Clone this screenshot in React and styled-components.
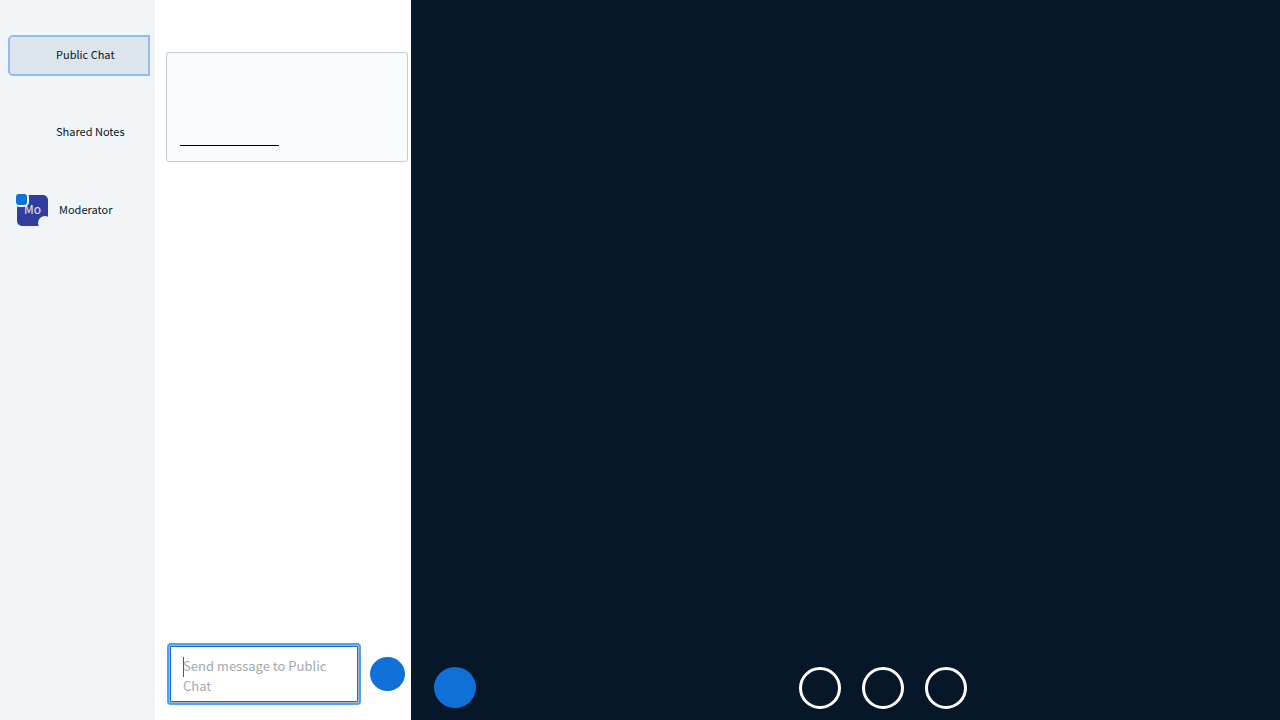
import React from "react";
import styled, { createGlobalStyle } from "styled-components";

const GlobalStyle = createGlobalStyle`
  *, *::before, *::after { box-sizing: border-box; }
  body {
    margin: 0;
    font-family: "Noto Sans CJK SC", "Noto Sans", sans-serif;
    color: #06172a;
  }
  button, textarea { font: inherit; color: inherit; margin: 0; }
`;

const Layout = styled.div`
  display: flex;
  min-height: 100vh;
`;

const Sidebar = styled.nav`
  flex: 0 0 155px;
  display: flex;
  flex-direction: column;
  gap: 36px;
  padding: 35px 5px 0 8px;
  background: #f1f5f8;
`;

const NavItem = styled.button`
  height: 41px;
  padding: 0 0 4px 46px;
  border: 2px solid ${(p) => (p.$active ? "#92bceb" : "transparent")};
  border-radius: 5px 0 0 5px;
  background: ${(p) => (p.$active ? "#dce4ed" : "transparent")};
  font-size: 11px;
  line-height: 16px;
  text-align: left;
  white-space: nowrap;
  cursor: pointer;
`;

const UserItem = styled.button`
  display: flex;
  align-items: center;
  gap: 11px;
  height: 43px;
  padding: 0 0 0 9px;
  border: 0;
  background: transparent;
  font-size: 11px;
  line-height: 16px;
  cursor: pointer;
`;

const UserName = styled.span`
  padding-bottom: 4px;
`;

const Avatar = styled.span`
  position: relative;
  display: flex;
  align-items: center;
  justify-content: center;
  width: 31px;
  height: 31px;
  padding-bottom: 4px;
  border-radius: 5px;
  background: #303f9f;
  color: #e6e9f5;
  font-size: 12px;
`;

const PresenterBadge = styled.span`
  position: absolute;
  top: -3px;
  left: -3px;
  width: 15px;
  height: 15px;
  border: 2px solid #f1f5f8;
  border-radius: 5px;
  background: #0f70d7;
`;

const VoiceBadge = styled.span`
  position: absolute;
  right: -4px;
  bottom: -4px;
  width: 14px;
  height: 14px;
  border-radius: 50%;
  background: #f1f5f8;
`;

const Chat = styled.section`
  flex: 0 0 256px;
  display: flex;
  flex-direction: column;
  justify-content: space-between;
  padding: 52px 3px 17px 11px;
  background: #fff;
`;

const Welcome = styled.div`
  display: flex;
  align-items: flex-end;
  height: 110px;
  padding: 0 13px 15px;
  border: 1px solid #c3cbd3;
  border-radius: 3px;
  background: #fafbfd;
`;

const LinkLine = styled.span`
  width: 99px;
  height: 1px;
  background: #000;
`;

const Composer = styled.form`
  display: flex;
  align-items: center;
  gap: 11px;
  padding: 0 3px;
`;

const Field = styled.div`
  position: relative;
  flex: 1;
  display: flex;
`;

const MessageInput = styled.textarea`
  flex: 1;
  min-width: 0;
  height: 58px;
  padding: 10px 13px;
  border: 1px solid #a7b3bd;
  border-radius: 2px;
  outline: 0;
  box-shadow: 0 0 0 2px #559ff0, inset 0 0 0 1px #0f70d7;
  background: #fff;
  font-size: 13px;
  line-height: 20px;
  resize: none;
  overflow: hidden;
  caret-color: transparent;
  &::placeholder { color: #a3a9b1; opacity: 1; }
`;

const Caret = styled.span`
  position: absolute;
  top: 12px;
  left: 14px;
  width: 1px;
  height: 20px;
  background: #4e5a67;
`;

const SendButton = styled.button`
  flex: none;
  width: 35px;
  height: 34px;
  padding: 0;
  border: 0;
  border-radius: 50%;
  background: #0f70d7;
  cursor: pointer;
`;

const Media = styled.main`
  flex: 1;
  min-width: 0;
  display: flex;
  flex-direction: column;
  justify-content: flex-end;
  background: #06172a;
`;

const ActionsBar = styled.div`
  display: flex;
  align-items: flex-start;
  padding: 0 0 11px 23px;
`;

const MediaControls = styled.div`
  flex: 1;
  display: flex;
  justify-content: center;
  gap: 21px;
  padding-left: 10px;
`;

const RoundButton = styled.button`
  width: 42px;
  height: ${(p) => (p.$filled ? "41px" : "42px")};
  padding: 0;
  border: 3px solid ${(p) => (p.$filled ? "#0f70d7" : "#fff")};
  border-radius: 50%;
  background: ${(p) => (p.$filled ? "#0f70d7" : "transparent")};
  cursor: pointer;
`;

export default function App() {
  return (
    <>
      <GlobalStyle />
      <Layout>
        <Sidebar>
          <NavItem type="button" $active>Public Chat</NavItem>
          <NavItem type="button">Shared Notes</NavItem>
          <UserItem type="button">
            <Avatar>
              Mo
              <PresenterBadge />
              <VoiceBadge />
            </Avatar>
            <UserName>Moderator</UserName>
          </UserItem>
        </Sidebar>
        <Chat>
          <Welcome>
            <LinkLine />
          </Welcome>
          <Composer onSubmit={(e) => e.preventDefault()}>
            <Field>
              <MessageInput
                aria-label="Send message to Public Chat"
                placeholder="Send message to Public Chat"
              />
              <Caret />
            </Field>
            <SendButton type="submit" aria-label="Send message" />
          </Composer>
        </Chat>
        <Media>
          <ActionsBar>
            <RoundButton type="button" $filled aria-label="Actions" />
            <MediaControls>
              <RoundButton type="button" aria-label="Join audio" />
              <RoundButton type="button" aria-label="Share webcam" />
              <RoundButton type="button" aria-label="Share screen" />
            </MediaControls>
          </ActionsBar>
        </Media>
      </Layout>
    </>
  );
}
